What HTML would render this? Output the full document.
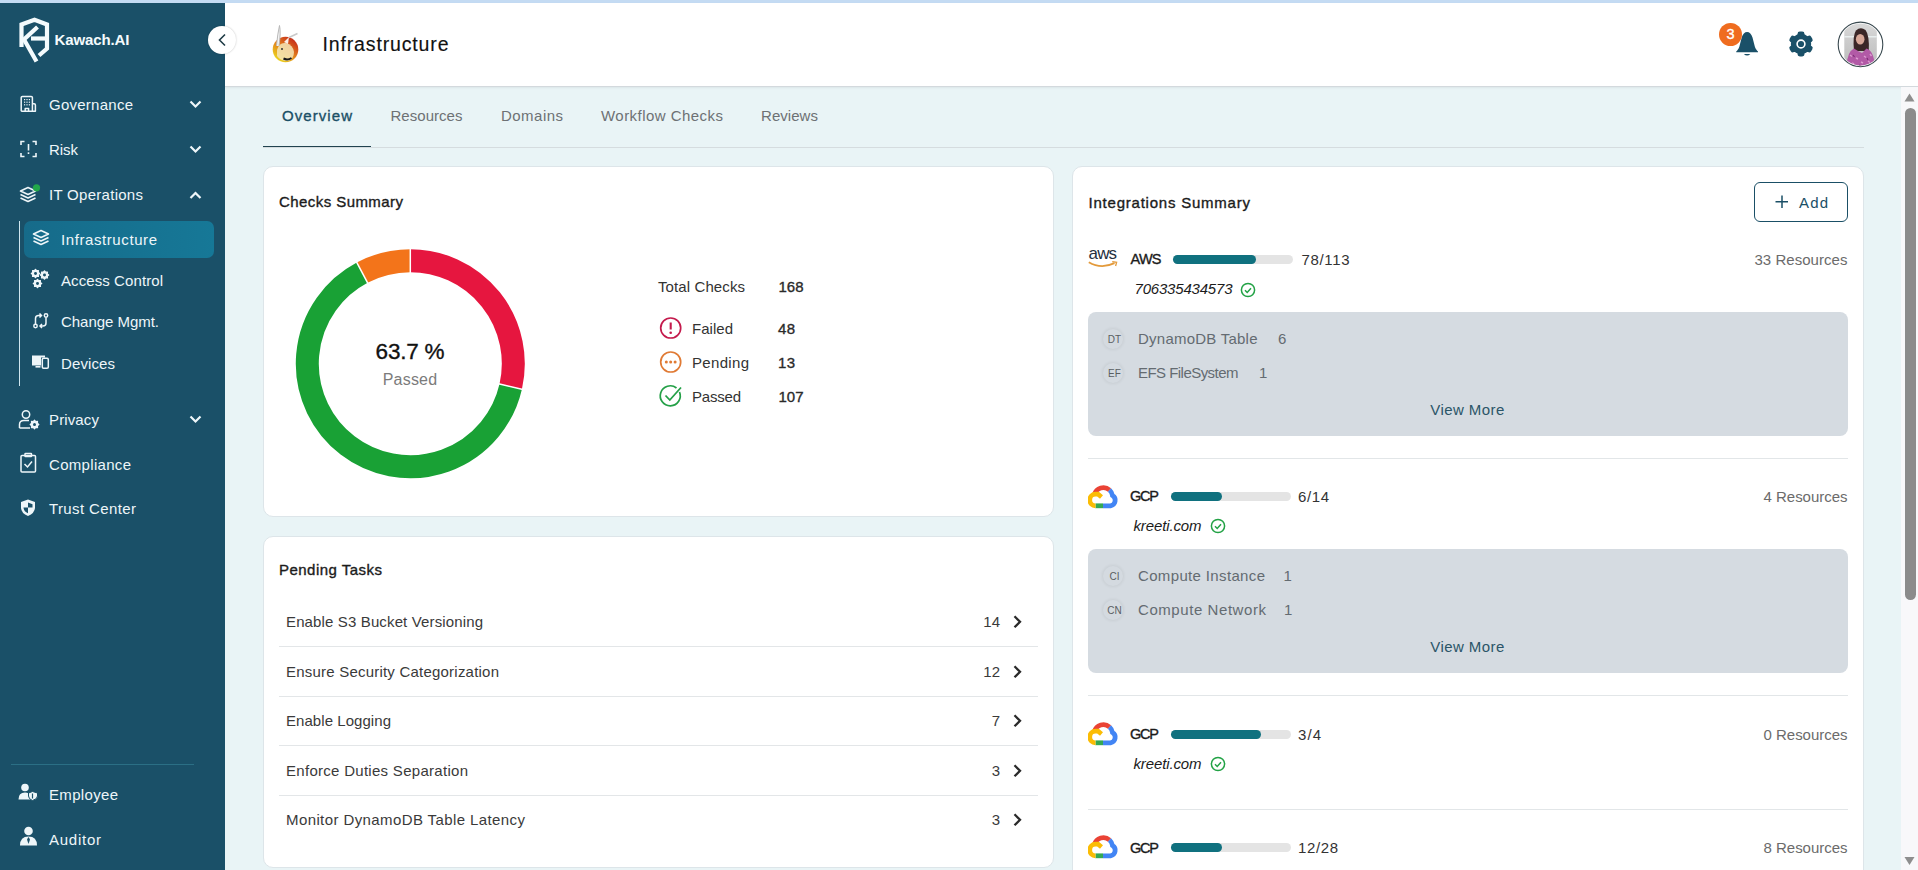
<!DOCTYPE html>
<html><head><meta charset="utf-8"><title>Infrastructure</title>
<style>html,body{margin:0;padding:0;width:1918px;height:870px;overflow:hidden;background:#e9f4f6;font-family:"Liberation Sans", sans-serif;}
*{font-family:"Liberation Sans", sans-serif;}</style></head>
<body><div style="position:relative;width:1918px;height:870px;overflow:hidden">
<div style="position:absolute;left:0;top:0;width:1918px;height:3px;background:#c4dbf3"></div>
<div style="position:absolute;left:225px;top:3px;width:1693px;height:867px;background:#e9f4f6"></div>
<div style="position:absolute;left:0;top:3px;width:225px;height:867px;background:#1a5068"></div>
<div style="position:absolute;left:225px;top:3px;width:1693px;height:83px;background:#fff;border-bottom:1px solid #d3d9dd;box-shadow:0 1px 2px rgba(0,0,0,0.06)"></div>
<svg style="position:absolute;left:0;top:0" width="225" height="80" viewBox="0 0 225 80">
<g fill="none" stroke="#f4fbfd" stroke-width="4.2" stroke-linejoin="miter">
<path d="M21.5 47 L21.5 24.5 L34.5 19.8 L47 24.5 L47 48.5 L39 55.5"/>
<path d="M37.5 27 L24 39.5 L36.5 61.5"/>
<path d="M31 38.5 L47 38.5"/>
</g></svg>
<div style="position:absolute;left:208px;top:26px;width:28px;height:28px;border-radius:50%;background:#fff;box-shadow:0 0 2px rgba(0,0,0,0.25);z-index:6"></div>
<svg style="position:absolute;left:208px;top:26px;z-index:7" width="28" height="28"><path d="M17 8.5 L11.5 14 L17 19.5" fill="none" stroke="#1f3b46" stroke-width="1.6"/></svg>
<svg style="position:absolute;left:0;top:0" width="60" height="220"><g fill="none" stroke="#eef6f9" stroke-width="1.5" stroke-linejoin="round">
<path d="M21.2 111.2 L21.2 97.6 Q21.2 96.4 22.4 96.4 L31.2 96.4 Q32.4 96.4 32.4 97.6 L32.4 111.2 M32.4 103.8 L34.2 103.8 Q35.4 103.8 35.4 105 L35.4 111.2 L21.2 111.2 M25.2 111 L25.2 108.4 L28.6 108.4 L28.6 111"/></g>
<g fill="#eef6f9"><rect x="24.0" y="99.0" width="1.2" height="1.2"/><rect x="24.0" y="101.6" width="1.2" height="1.2"/><rect x="24.0" y="104.2" width="1.2" height="1.2"/><rect x="26.4" y="99.0" width="1.2" height="1.2"/><rect x="26.4" y="101.6" width="1.2" height="1.2"/><rect x="26.4" y="104.2" width="1.2" height="1.2"/><rect x="28.8" y="99.0" width="1.2" height="1.2"/><rect x="28.8" y="101.6" width="1.2" height="1.2"/><rect x="28.8" y="104.2" width="1.2" height="1.2"/></g></svg>
<svg style="position:absolute;left:0;top:0px" width="225" height="210"><path d="M190.5 101.5 L195.5 106.5 L200.5 101.5" fill="none" stroke="#eef6f9" stroke-width="2.2"/></svg>
<svg style="position:absolute;left:0;top:0" width="60" height="220"><g fill="none" stroke="#eef6f9" stroke-width="1.6">
<path d="M21 145 L21 141.5 L24.5 141.5 M32.5 141.5 L36 141.5 L36 145 M36 153 L36 156.5 L32.5 156.5 M24.5 156.5 L21 156.5 L21 153"/>
<path d="M28.5 144 L28.5 150.5"/></g><rect x="27.7" y="152.3" width="1.6" height="1.7" fill="#eef6f9"/></svg>
<svg style="position:absolute;left:0;top:45px" width="225" height="210"><path d="M190.5 101.5 L195.5 106.5 L200.5 101.5" fill="none" stroke="#eef6f9" stroke-width="2.2"/></svg>
<svg style="position:absolute;left:19px;top:186px;overflow:visible" width="22" height="20" viewBox="0 0 22 20"><g fill="none" stroke="#eef6f9" stroke-width="1.6" stroke-linejoin="round">
<path d="M9 1.5 L16.5 5 L9 8.5 L1.5 5 Z"/><path d="M1.5 8.5 L9 12 L16.5 8.5"/><path d="M1.5 12 L9 15.5 L16.5 12"/></g><circle cx="17.5" cy="1.8" r="3.6" fill="#22a84a"/></svg>
<svg style="position:absolute;left:0;top:90px" width="225" height="210"><path d="M190.5 108 L195.5 103 L200.5 108" fill="none" stroke="#eef6f9" stroke-width="2.2"/></svg>
<div style="position:absolute;left:19px;top:221px;width:1.3px;height:165px;background:#cfe6ef"></div>
<div style="position:absolute;left:24px;top:221px;width:190px;height:37px;border-radius:7px;background:linear-gradient(90deg,#166b8a,#167897)"></div>
<svg style="position:absolute;left:32px;top:229px;overflow:visible" width="22" height="20" viewBox="0 0 22 20"><g fill="none" stroke="#eef6f9" stroke-width="1.6" stroke-linejoin="round">
<path d="M9 1.5 L16.5 5 L9 8.5 L1.5 5 Z"/><path d="M1.5 8.5 L9 12 L16.5 8.5"/><path d="M1.5 12 L9 15.5 L16.5 12"/></g></svg>
<svg style="position:absolute;left:0;top:0" width="60" height="300"><path d="M39.70 273.50 L38.29 274.66 L38.47 276.47 L36.66 276.29 L35.50 277.70 L34.34 276.29 L32.53 276.47 L32.71 274.66 L31.30 273.50 L32.71 272.34 L32.53 270.53 L34.34 270.71 L35.50 269.30 L36.66 270.71 L38.47 270.53 L38.29 272.34Z" fill="#eef6f9" stroke="#eef6f9" stroke-width="1.2" stroke-linejoin="round"/><circle cx="35.5" cy="273.5" r="1.47" fill="#1a5068"/><path d="M48.70 275.00 L47.29 276.16 L47.47 277.97 L45.66 277.79 L44.50 279.20 L43.34 277.79 L41.53 277.97 L41.71 276.16 L40.30 275.00 L41.71 273.84 L41.53 272.03 L43.34 272.21 L44.50 270.80 L45.66 272.21 L47.47 272.03 L47.29 273.84Z" fill="#eef6f9" stroke="#eef6f9" stroke-width="1.2" stroke-linejoin="round"/><circle cx="44.5" cy="275" r="1.47" fill="#1a5068"/><path d="M41.70 283.50 L40.29 284.66 L40.47 286.47 L38.66 286.29 L37.50 287.70 L36.34 286.29 L34.53 286.47 L34.71 284.66 L33.30 283.50 L34.71 282.34 L34.53 280.53 L36.34 280.71 L37.50 279.30 L38.66 280.71 L40.47 280.53 L40.29 282.34Z" fill="#eef6f9" stroke="#eef6f9" stroke-width="1.2" stroke-linejoin="round"/><circle cx="37.5" cy="283.5" r="1.47" fill="#1a5068"/></svg>
<svg style="position:absolute;left:0;top:0" width="60" height="340"><g fill="none" stroke="#eef6f9" stroke-width="1.5">
<circle cx="35.5" cy="326" r="1.7"/><circle cx="46" cy="315.5" r="1.7"/>
<path d="M35.5 324 L35.5 318.5 Q35.5 315.5 38.5 315.5 L41 315.5 M39.5 313.5 L41.5 315.5 L39.5 317.5"/>
<path d="M46 317.5 L46 323 Q46 326 43 326 L40.5 326 M42 324 L40 326 L42 328"/></g></svg>
<svg style="position:absolute;left:0;top:0" width="60" height="380"><g fill="#eef6f9">
<path d="M32 355.5 h13 v2 h-4 v8 h-9 z"/><rect x="35.5" y="366" width="5" height="1.6"/></g>
<rect x="42.3" y="358.3" width="6" height="10" rx="1.2" fill="none" stroke="#eef6f9" stroke-width="1.5"/></svg>
<svg style="position:absolute;left:0;top:0" width="60" height="440"><g fill="none" stroke="#eef6f9" stroke-width="1.5">
<circle cx="26" cy="414.5" r="3.7"/><path d="M19.5 428 L19.5 424.5 Q19.5 420.5 24 420.5 L29 420.5"/><path d="M19.5 428 L30 428"/></g>
<path d="M38.80 424.50 L37.36 425.68 L37.54 427.54 L35.68 427.36 L34.50 428.80 L33.32 427.36 L31.46 427.54 L31.64 425.68 L30.20 424.50 L31.64 423.32 L31.46 421.46 L33.32 421.64 L34.50 420.20 L35.68 421.64 L37.54 421.46 L37.36 423.32Z" fill="#eef6f9" stroke="#eef6f9" stroke-width="1.2" stroke-linejoin="round"/><circle cx="34.5" cy="424.5" r="1.50" fill="#1a5068"/></svg>
<svg style="position:absolute;left:0;top:315px" width="225" height="210"><path d="M190.5 101.5 L195.5 106.5 L200.5 101.5" fill="none" stroke="#eef6f9" stroke-width="2.2"/></svg>
<svg style="position:absolute;left:0;top:0" width="60" height="480"><g fill="none" stroke="#eef6f9" stroke-width="1.5">
<rect x="21" y="455.5" width="14.5" height="16.5" rx="1"/><rect x="25" y="453.5" width="6.5" height="3" rx="0.5"/>
<path d="M24.5 464 L27.5 467 L32 461.5"/></g></svg>
<svg style="position:absolute;left:0;top:0" width="60" height="520">
<path d="M28 499.5 L35 502 L35 507.5 Q35 513 28 516 Q21 513 21 507.5 L21 502 Z" fill="#eef6f9"/>
<path d="M28 502.5 L32.5 504.2 L32.5 507.5 L28 507.5 Z M28 507.5 L23.5 507.5 Q23.8 511.5 28 513.3 Z" fill="#1a5068"/></svg>
<div style="position:absolute;left:11px;top:764px;width:183px;height:1px;background:#2b6f85"></div>
<svg style="position:absolute;left:0;top:0" width="60" height="860"><g fill="#eef6f9">
<circle cx="25" cy="787.5" r="3.8"/><path d="M18.5 799.5 Q18.5 792.5 25 792.5 Q29 792.5 30.5 795 L30.5 799.5 Z"/>
<path d="M32.5 791.5 L37.5 793 L37.5 796 Q37.5 799 32.5 800.5 Q28.5 799 28.5 796 L28.5 793 Z" stroke="#1a5068" stroke-width="1"/></g>
<path d="M32.5 793.5 L32.5 798.5" stroke="#1a5068" stroke-width="1.2"/></svg>
<svg style="position:absolute;left:0;top:0" width="60" height="860"><g fill="#eef6f9">
<circle cx="28.5" cy="831" r="4.3"/><path d="M20 845.5 Q20 836.5 28.5 836.5 Q37 836.5 37 845.5 Z"/></g>
<path d="M28.5 837 L27 839.5 L28.5 844 L30 839.5 Z" fill="#1a5068"/></svg>
<svg style="position:absolute;left:262px;top:20px" width="46" height="48" viewBox="0 0 46 48">
<defs><linearGradient id="mg" x1="0.8" y1="0.1" x2="0.2" y2="0.9"><stop offset="0" stop-color="#c7301c"/><stop offset="0.45" stop-color="#e0781c"/><stop offset="1" stop-color="#ecd21e"/></linearGradient></defs>
<circle cx="23.5" cy="29.5" r="12.8" fill="url(#mg)"/>
<path d="M15 30 Q17 22 24 23 Q31 25 32 32 Q32 39 26 41 Q18 41 15 36 Z" fill="#f4e6b8" opacity="0.85"/>
<path d="M22 22 L27 17 L26 24 Z" fill="#fff" opacity="0.9"/>
<path d="M21.5 38.5 Q25.5 40.5 29.5 38" fill="none" stroke="#1a1a1a" stroke-width="2"/>
<circle cx="20" cy="29" r="1" fill="#333"/>
<path d="M14.5 26 Q15.5 14 17.5 5.5 Q19 12 17 26" fill="#f4f4f4" stroke="#b8b8b8" stroke-width="1"/>
<path d="M27 17.5 L35.5 13.5" stroke="#c9c9c9" stroke-width="1.5"/>
</svg>
<svg style="position:absolute;left:1730px;top:26px" width="34" height="36" viewBox="0 0 34 36">
<path d="M17.1 6 C19.5 6 21.5 8 22.5 11.5 L24.8 20.5 C25.5 23 27 24.5 28 25.5 L28 26.2 L6.2 26.2 L6.2 25.5 C7.2 24.5 8.7 23 9.4 20.5 L11.7 11.5 C12.7 8 14.7 6 17.1 6Z" fill="#1a5068"/>
<path d="M13.8 28 Q17.1 31 20.4 28 Z" fill="#1a5068"/>
</svg>
<div style="position:absolute;left:1719px;top:23px;width:23px;height:23px;border-radius:50%;background:#ef6c1f"></div>
<svg style="position:absolute;left:1786px;top:28.7px" width="30" height="30" viewBox="0 0 30 30">
<rect x="11.5" y="2.6" width="7" height="6.5" rx="2.3" transform="rotate(0 15 15)" fill="#1a5068"/><rect x="11.5" y="2.6" width="7" height="6.5" rx="2.3" transform="rotate(60 15 15)" fill="#1a5068"/><rect x="11.5" y="2.6" width="7" height="6.5" rx="2.3" transform="rotate(120 15 15)" fill="#1a5068"/><rect x="11.5" y="2.6" width="7" height="6.5" rx="2.3" transform="rotate(180 15 15)" fill="#1a5068"/><rect x="11.5" y="2.6" width="7" height="6.5" rx="2.3" transform="rotate(240 15 15)" fill="#1a5068"/><rect x="11.5" y="2.6" width="7" height="6.5" rx="2.3" transform="rotate(300 15 15)" fill="#1a5068"/><circle cx="15" cy="15" r="10.2" fill="#1a5068"/><circle cx="15" cy="15" r="3.9" fill="none" stroke="#fff" stroke-width="1.6"/></svg>
<svg style="position:absolute;left:1837px;top:21px" width="48" height="48" viewBox="0 0 48 48">
<defs><clipPath id="av"><circle cx="23.5" cy="23.4" r="21"/></clipPath>
<linearGradient id="avbg" x1="0" y1="0" x2="0" y2="1"><stop offset="0" stop-color="#dadada"/><stop offset="1" stop-color="#b9b9b9"/></linearGradient></defs>
<circle cx="23.5" cy="23.4" r="22" fill="#fff"/>
<g clip-path="url(#av)">
<rect x="7.3" y="0" width="32.5" height="48" fill="url(#avbg)"/>
<rect x="7.3" y="15" width="32.5" height="1.5" fill="#e8eeee"/>
<path d="M17 30 Q15.5 14 19 9.5 Q23.5 5.5 28.5 9 Q32.5 14 31.8 30 Z" fill="#3b2727"/>
<ellipse cx="23.2" cy="18.3" rx="4.3" ry="5.3" fill="#d8a898"/>
<path d="M9.5 48 Q9.5 31 17 27.5 L21 30 L25 32 L29.5 27.5 Q37.5 30 38 48 Z" fill="#b25aa6"/>
<path d="M13 34 l2 1.5 M19 37 l2 1 M27 35 l2 1.5 M33 33 l1.5 2 M15 42 l2 1 M24 41 l2 1 M31 40 l2 1.5 M20 45 l2 1" stroke="#dc9ad0" stroke-width="1.4"/>
<path d="M16 34 l1.5 2 M30 37 l1 2 M22 44 l1.5 1" stroke="#7e2f77" stroke-width="1.2"/>
</g>
<circle cx="23.5" cy="23.4" r="22.3" fill="none" stroke="#3a4a50" stroke-width="1.1"/>
</svg>
<div style="position:absolute;left:1901px;top:87px;width:17px;height:783px;background:#f8f8fa"></div>
<svg style="position:absolute;left:1901px;top:87px" width="17" height="20"><path d="M3.5 14.5 L8.5 6.5 L13.5 14.5 Z" fill="#8e8e8e"/></svg>
<div style="position:absolute;left:1905px;top:108px;width:11px;height:492px;border-radius:6px;background:#8b8b8b"></div>
<svg style="position:absolute;left:1901px;top:853px" width="17" height="17"><path d="M3.5 4 L13.5 4 L8.5 12 Z" fill="#8e8e8e"/></svg>
<div style="position:absolute;left:263px;top:147px;width:1601px;height:1px;background:#d5dcdf"></div>
<div style="position:absolute;left:263px;top:145.7px;width:108px;height:1.5px;background:#21434f"></div>
<div style="position:absolute;left:263px;top:166px;width:791px;height:351px;background:#fff;border:1px solid #dde5e9;border-radius:10px;box-sizing:border-box"></div>
<div style="position:absolute;left:263px;top:536px;width:791px;height:332px;background:#fff;border:1px solid #dde5e9;border-radius:10px;box-sizing:border-box"></div>
<div style="position:absolute;left:1072px;top:166px;width:792px;height:720px;background:#fff;border:1px solid #dde5e9;border-radius:10px;box-sizing:border-box"></div>
<svg style="position:absolute;left:0;top:0;z-index:3" width="1060" height="520"><path d="M410.30 260.70 A103 103 0 0 1 510.72 386.62" fill="none" stroke="#e6163f" stroke-width="23"/><path d="M510.72 386.62 A103 103 0 1 1 362.17 272.64" fill="none" stroke="#19a135" stroke-width="23"/><path d="M362.17 272.64 A103 103 0 0 1 410.30 260.70" fill="none" stroke="#f3741a" stroke-width="23"/><path d="M410.30 273.20 L410.30 248.20" stroke="#fff" stroke-width="1.5"/><path d="M498.53 383.84 L522.90 389.40" stroke="#fff" stroke-width="1.5"/><path d="M368.01 283.69 L356.33 261.58" stroke="#fff" stroke-width="1.5"/></svg>
<svg style="position:absolute;left:658px;top:315px;z-index:4" width="26" height="95" viewBox="0 0 26 95">
<circle cx="12.7" cy="13" r="10" fill="none" stroke="#c41a4c" stroke-width="1.7"/>
<path d="M12.7 7.5 L12.7 14.5" stroke="#c41a4c" stroke-width="2.1"/><circle cx="12.7" cy="17.8" r="1.3" fill="#c41a4c"/>
<circle cx="12.7" cy="47" r="10" fill="none" stroke="#e07a34" stroke-width="1.7"/>
<circle cx="8.3" cy="47" r="1.5" fill="#e07a34"/><circle cx="12.7" cy="47" r="1.5" fill="#e07a34"/><circle cx="17.1" cy="47" r="1.5" fill="#e07a34"/>
<path d="M21.5 77 A10 10 0 1 1 18.5 73" fill="none" stroke="#24a047" stroke-width="1.7"/>
<path d="M7.5 80.5 L11.8 85 L23 72.5" fill="none" stroke="#24a047" stroke-width="1.8"/>
</svg>
<svg style="position:absolute;left:1010px;top:613.6px" width="16" height="16"><path d="M4.5 2.3 L10 7.8 L4.5 13.3" fill="none" stroke="#2a2a2a" stroke-width="2.3"/></svg>
<div style="position:absolute;left:279px;top:646px;width:759px;height:1px;background:#e3e6e8"></div>
<svg style="position:absolute;left:1010px;top:663.5px" width="16" height="16"><path d="M4.5 2.3 L10 7.8 L4.5 13.3" fill="none" stroke="#2a2a2a" stroke-width="2.3"/></svg>
<div style="position:absolute;left:279px;top:696px;width:759px;height:1px;background:#e3e6e8"></div>
<svg style="position:absolute;left:1010px;top:712.9px" width="16" height="16"><path d="M4.5 2.3 L10 7.8 L4.5 13.3" fill="none" stroke="#2a2a2a" stroke-width="2.3"/></svg>
<div style="position:absolute;left:279px;top:745px;width:759px;height:1px;background:#e3e6e8"></div>
<svg style="position:absolute;left:1010px;top:762.7px" width="16" height="16"><path d="M4.5 2.3 L10 7.8 L4.5 13.3" fill="none" stroke="#2a2a2a" stroke-width="2.3"/></svg>
<div style="position:absolute;left:279px;top:795px;width:759px;height:1px;background:#e3e6e8"></div>
<svg style="position:absolute;left:1010px;top:812.1px" width="16" height="16"><path d="M4.5 2.3 L10 7.8 L4.5 13.3" fill="none" stroke="#2a2a2a" stroke-width="2.3"/></svg>
<div style="position:absolute;left:1754px;top:182px;width:94px;height:40px;border:1.5px solid #1a4f66;border-radius:6px;box-sizing:border-box"></div>
<svg style="position:absolute;left:1774px;top:194px" width="16" height="16"><path d="M8 1.5 L8 14 M1.5 7.8 L14 7.8" stroke="#1a4f66" stroke-width="1.5"/></svg>
<svg style="position:absolute;left:1086px;top:244px" width="34" height="26" viewBox="0 0 34 26">
<text x="2.6" y="14.8" font-family="Liberation Sans" font-size="17" fill="#252f3e" letter-spacing="-0.9">aws</text>
<path d="M2.8 18.2 Q15 25.5 28.5 19.2" fill="none" stroke="#e39a3b" stroke-width="1.9"/><path d="M26.2 17.6 L30.6 18.3 L29.6 22" fill="none" stroke="#e39a3b" stroke-width="1.3"/></svg>
<div style="position:absolute;left:1173px;top:255px;width:120px;height:9px;border-radius:5px;background:#e4e4e4"></div>
<div style="position:absolute;left:1173px;top:255px;width:83px;height:9px;border-radius:5px;background:#10717f"></div>
<svg style="position:absolute;left:1239.5px;top:281.5px" width="16" height="16"><circle cx="8" cy="8" r="6.6" fill="none" stroke="#22a245" stroke-width="1.5"/><path d="M5 8.3 L7.2 10.5 L11 6.3" fill="none" stroke="#22a245" stroke-width="1.5"/></svg>
<div style="position:absolute;left:1088px;top:312px;width:760px;height:124px;border-radius:8px;background:#d5dbe1"></div>
<div style="position:absolute;left:1103px;top:328.5px;width:20px;height:20px;border-radius:50%;background:#d4dae0;box-shadow:0 0 3px 1px rgba(0,0,0,0.06)"></div>
<div style="position:absolute;left:1103px;top:362.5px;width:20px;height:20px;border-radius:50%;background:#d4dae0;box-shadow:0 0 3px 1px rgba(0,0,0,0.06)"></div>
<div style="position:absolute;left:1088px;top:458px;width:760px;height:1px;background:#e2e6e8"></div>
<svg style="position:absolute;left:1088px;top:483.5px" width="31" height="25" viewBox="0 0 31 25"><g fill="none" stroke-width="4.8" stroke-linecap="butt">
<path d="M6.5 10.5 A9.2 9.2 0 0 1 21.5 6" stroke="#ea4335"/>
<path d="M21.5 6 A9.2 9.2 0 0 1 24.5 11.5 A5.6 5.6 0 0 1 22.5 21.8 L15 21.8" stroke="#4285f4"/>
<path d="M15 21.8 L7.5 21.8" stroke="#34a853"/>
<path d="M7.5 21.8 A5.8 5.8 0 0 1 7.5 10.2 L10 10.2 L13.5 13" stroke="#fbbc04"/>
</g></svg>
<div style="position:absolute;left:1171px;top:492px;width:120px;height:9px;border-radius:5px;background:#e4e4e4"></div>
<div style="position:absolute;left:1171px;top:492px;width:51px;height:9px;border-radius:5px;background:#10717f"></div>
<svg style="position:absolute;left:1209.5px;top:518.3px" width="16" height="16"><circle cx="8" cy="8" r="6.6" fill="none" stroke="#22a245" stroke-width="1.5"/><path d="M5 8.3 L7.2 10.5 L11 6.3" fill="none" stroke="#22a245" stroke-width="1.5"/></svg>
<div style="position:absolute;left:1088px;top:549px;width:760px;height:124px;border-radius:8px;background:#d5dbe1"></div>
<div style="position:absolute;left:1103px;top:565.8px;width:20px;height:20px;border-radius:50%;background:#d4dae0;box-shadow:0 0 3px 1px rgba(0,0,0,0.06)"></div>
<div style="position:absolute;left:1103px;top:599.6px;width:20px;height:20px;border-radius:50%;background:#d4dae0;box-shadow:0 0 3px 1px rgba(0,0,0,0.06)"></div>
<div style="position:absolute;left:1088px;top:695px;width:760px;height:1px;background:#e2e6e8"></div>
<svg style="position:absolute;left:1088px;top:720.5px" width="31" height="25" viewBox="0 0 31 25"><g fill="none" stroke-width="4.8" stroke-linecap="butt">
<path d="M6.5 10.5 A9.2 9.2 0 0 1 21.5 6" stroke="#ea4335"/>
<path d="M21.5 6 A9.2 9.2 0 0 1 24.5 11.5 A5.6 5.6 0 0 1 22.5 21.8 L15 21.8" stroke="#4285f4"/>
<path d="M15 21.8 L7.5 21.8" stroke="#34a853"/>
<path d="M7.5 21.8 A5.8 5.8 0 0 1 7.5 10.2 L10 10.2 L13.5 13" stroke="#fbbc04"/>
</g></svg>
<div style="position:absolute;left:1171px;top:729.5px;width:120px;height:9px;border-radius:5px;background:#e4e4e4"></div>
<div style="position:absolute;left:1171px;top:729.5px;width:90px;height:9px;border-radius:5px;background:#10717f"></div>
<svg style="position:absolute;left:1209.5px;top:756px" width="16" height="16"><circle cx="8" cy="8" r="6.6" fill="none" stroke="#22a245" stroke-width="1.5"/><path d="M5 8.3 L7.2 10.5 L11 6.3" fill="none" stroke="#22a245" stroke-width="1.5"/></svg>
<div style="position:absolute;left:1088px;top:809px;width:760px;height:1px;background:#e2e6e8"></div>
<svg style="position:absolute;left:1088px;top:833.5px" width="31" height="25" viewBox="0 0 31 25"><g fill="none" stroke-width="4.8" stroke-linecap="butt">
<path d="M6.5 10.5 A9.2 9.2 0 0 1 21.5 6" stroke="#ea4335"/>
<path d="M21.5 6 A9.2 9.2 0 0 1 24.5 11.5 A5.6 5.6 0 0 1 22.5 21.8 L15 21.8" stroke="#4285f4"/>
<path d="M15 21.8 L7.5 21.8" stroke="#34a853"/>
<path d="M7.5 21.8 A5.8 5.8 0 0 1 7.5 10.2 L10 10.2 L13.5 13" stroke="#fbbc04"/>
</g></svg>
<div style="position:absolute;left:1171px;top:843px;width:120px;height:9px;border-radius:5px;background:#e4e4e4"></div>
<div style="position:absolute;left:1171px;top:843px;width:51px;height:9px;border-radius:5px;background:#10717f"></div>
<div id="t0" style="position:absolute;top:30.30px;font-size:15px;line-height:20px;font-weight:700;color:#f4fbfd;white-space:nowrap;z-index:5;letter-spacing:-0.107px;left:54.5px;">Kawach.AI</div>
<div id="t1" style="position:absolute;top:94.80px;font-size:15px;line-height:20px;font-weight:400;color:#eef6f9;white-space:nowrap;z-index:5;letter-spacing:0.253px;left:49px;">Governance</div>
<div id="t2" style="position:absolute;top:139.80px;font-size:15px;line-height:20px;font-weight:400;color:#eef6f9;white-space:nowrap;z-index:5;letter-spacing:-0.057px;left:49px;">Risk</div>
<div id="t3" style="position:absolute;top:184.80px;font-size:15px;line-height:20px;font-weight:400;color:#eef6f9;white-space:nowrap;z-index:5;letter-spacing:0.283px;left:49px;">IT Operations</div>
<div id="t4" style="position:absolute;top:229.80px;font-size:15px;line-height:20px;font-weight:400;color:#eef6f9;white-space:nowrap;z-index:5;letter-spacing:0.587px;left:61px;">Infrastructure</div>
<div id="t5" style="position:absolute;top:270.80px;font-size:15px;line-height:20px;font-weight:400;color:#eef6f9;white-space:nowrap;z-index:5;letter-spacing:0.087px;left:61px;">Access Control</div>
<div id="t6" style="position:absolute;top:312.30px;font-size:15px;line-height:20px;font-weight:400;color:#eef6f9;white-space:nowrap;z-index:5;letter-spacing:-0.036px;left:61px;">Change Mgmt.</div>
<div id="t7" style="position:absolute;top:353.80px;font-size:15px;line-height:20px;font-weight:400;color:#eef6f9;white-space:nowrap;z-index:5;letter-spacing:0.107px;left:61px;">Devices</div>
<div id="t8" style="position:absolute;top:409.80px;font-size:15px;line-height:20px;font-weight:400;color:#eef6f9;white-space:nowrap;z-index:5;letter-spacing:0.135px;left:49px;">Privacy</div>
<div id="t9" style="position:absolute;top:454.80px;font-size:15px;line-height:20px;font-weight:400;color:#eef6f9;white-space:nowrap;z-index:5;letter-spacing:0.309px;left:49px;">Compliance</div>
<div id="t10" style="position:absolute;top:499.30px;font-size:15px;line-height:20px;font-weight:400;color:#eef6f9;white-space:nowrap;z-index:5;letter-spacing:0.381px;left:49px;">Trust Center</div>
<div id="t11" style="position:absolute;top:784.80px;font-size:15px;line-height:20px;font-weight:400;color:#eef6f9;white-space:nowrap;z-index:5;letter-spacing:0.328px;left:49px;">Employee</div>
<div id="t12" style="position:absolute;top:829.80px;font-size:15px;line-height:20px;font-weight:400;color:#eef6f9;white-space:nowrap;z-index:5;letter-spacing:0.745px;left:49px;">Auditor</div>
<div id="t13" style="position:absolute;top:31.74px;font-size:19.5px;line-height:25px;font-weight:400;color:#111;white-space:nowrap;z-index:5;-webkit-text-stroke:0.35px #111;letter-spacing:0.855px;left:322.5px;-webkit-text-stroke:0.15px #111;">Infrastructure</div>
<div id="t14" style="position:absolute;top:25.28px;font-size:14.5px;line-height:19px;font-weight:400;color:#fff;white-space:nowrap;z-index:5;-webkit-text-stroke:0.35px #fff;left:1430.50px;width:600px;text-align:center;">3</div>
<div id="t15" style="position:absolute;top:105.80px;font-size:15px;line-height:20px;font-weight:400;color:#1a4f66;white-space:nowrap;z-index:5;-webkit-text-stroke:0.35px #1a4f66;letter-spacing:1.069px;left:282px;">Overview</div>
<div id="t16" style="position:absolute;top:105.80px;font-size:15px;line-height:20px;font-weight:400;color:#6d7174;white-space:nowrap;z-index:5;letter-spacing:0.037px;left:390.5px;">Resources</div>
<div id="t17" style="position:absolute;top:105.80px;font-size:15px;line-height:20px;font-weight:400;color:#6d7174;white-space:nowrap;z-index:5;letter-spacing:0.469px;left:501px;">Domains</div>
<div id="t18" style="position:absolute;top:105.80px;font-size:15px;line-height:20px;font-weight:400;color:#6d7174;white-space:nowrap;z-index:5;letter-spacing:0.458px;left:601px;">Workflow Checks</div>
<div id="t19" style="position:absolute;top:105.80px;font-size:15px;line-height:20px;font-weight:400;color:#6d7174;white-space:nowrap;z-index:5;letter-spacing:0.052px;left:761px;">Reviews</div>
<div id="t20" style="position:absolute;top:192.30px;font-size:15px;line-height:20px;font-weight:400;color:#1b1b1b;white-space:nowrap;z-index:5;-webkit-text-stroke:0.35px #1b1b1b;letter-spacing:0.434px;left:279px;">Checks Summary</div>
<div id="t21" style="position:absolute;top:336.70px;font-size:22.5px;line-height:29px;font-weight:400;color:#111;white-space:nowrap;z-index:5;-webkit-text-stroke:0.35px #111;left:110.00px;width:600px;text-align:center;letter-spacing:-0.2px;">63.7 %</div>
<div id="t22" style="position:absolute;top:369.26px;font-size:16px;line-height:21px;font-weight:400;color:#7b7b7b;white-space:nowrap;z-index:5;letter-spacing:0.225px;left:110.00px;width:600px;text-align:center;">Passed</div>
<div id="t23" style="position:absolute;top:276.60px;font-size:15px;line-height:20px;font-weight:400;color:#333;white-space:nowrap;z-index:5;letter-spacing:0.102px;left:658px;">Total Checks</div>
<div id="t24" style="position:absolute;top:276.60px;font-size:15px;line-height:20px;font-weight:400;color:#2a2a2a;white-space:nowrap;z-index:5;-webkit-text-stroke:0.35px #2a2a2a;letter-spacing:-0.016px;left:778.5px;">168</div>
<div id="t25" style="position:absolute;top:319.10px;font-size:15px;line-height:20px;font-weight:400;color:#333;white-space:nowrap;z-index:5;letter-spacing:0.028px;left:692px;">Failed</div>
<div id="t26" style="position:absolute;top:319.10px;font-size:15px;line-height:20px;font-weight:400;color:#2a2a2a;white-space:nowrap;z-index:5;-webkit-text-stroke:0.35px #2a2a2a;letter-spacing:0.312px;left:778px;">48</div>
<div id="t27" style="position:absolute;top:353.10px;font-size:15px;line-height:20px;font-weight:400;color:#333;white-space:nowrap;z-index:5;letter-spacing:0.323px;left:692px;">Pending</div>
<div id="t28" style="position:absolute;top:353.10px;font-size:15px;line-height:20px;font-weight:400;color:#2a2a2a;white-space:nowrap;z-index:5;-webkit-text-stroke:0.35px #2a2a2a;letter-spacing:0.312px;left:778px;">13</div>
<div id="t29" style="position:absolute;top:387.10px;font-size:15px;line-height:20px;font-weight:400;color:#333;white-space:nowrap;z-index:5;letter-spacing:-0.209px;left:692px;">Passed</div>
<div id="t30" style="position:absolute;top:387.10px;font-size:15px;line-height:20px;font-weight:400;color:#2a2a2a;white-space:nowrap;z-index:5;-webkit-text-stroke:0.35px #2a2a2a;letter-spacing:-0.016px;left:778.5px;">107</div>
<div id="t31" style="position:absolute;top:560.40px;font-size:15px;line-height:20px;font-weight:400;color:#1b1b1b;white-space:nowrap;z-index:5;-webkit-text-stroke:0.35px #1b1b1b;letter-spacing:0.475px;left:279px;">Pending Tasks</div>
<div id="t32" style="position:absolute;top:611.90px;font-size:15px;line-height:20px;font-weight:400;color:#3a3a3a;white-space:nowrap;z-index:5;letter-spacing:0.136px;left:286px;">Enable S3 Bucket Versioning</div>
<div id="t33" style="position:absolute;top:611.90px;font-size:15px;line-height:20px;font-weight:400;color:#3a3a3a;white-space:nowrap;z-index:5;right:918.00px;">14</div>
<div id="t34" style="position:absolute;top:661.80px;font-size:15px;line-height:20px;font-weight:400;color:#3a3a3a;white-space:nowrap;z-index:5;letter-spacing:0.214px;left:286px;">Ensure Security Categorization</div>
<div id="t35" style="position:absolute;top:661.80px;font-size:15px;line-height:20px;font-weight:400;color:#3a3a3a;white-space:nowrap;z-index:5;right:918.00px;">12</div>
<div id="t36" style="position:absolute;top:711.20px;font-size:15px;line-height:20px;font-weight:400;color:#3a3a3a;white-space:nowrap;z-index:5;letter-spacing:0.056px;left:286px;">Enable Logging</div>
<div id="t37" style="position:absolute;top:711.20px;font-size:15px;line-height:20px;font-weight:400;color:#3a3a3a;white-space:nowrap;z-index:5;right:918.00px;">7</div>
<div id="t38" style="position:absolute;top:761.00px;font-size:15px;line-height:20px;font-weight:400;color:#3a3a3a;white-space:nowrap;z-index:5;letter-spacing:0.287px;left:286px;">Enforce Duties Separation</div>
<div id="t39" style="position:absolute;top:761.00px;font-size:15px;line-height:20px;font-weight:400;color:#3a3a3a;white-space:nowrap;z-index:5;right:918.00px;">3</div>
<div id="t40" style="position:absolute;top:810.40px;font-size:15px;line-height:20px;font-weight:400;color:#3a3a3a;white-space:nowrap;z-index:5;letter-spacing:0.402px;left:286px;">Monitor DynamoDB Table Latency</div>
<div id="t41" style="position:absolute;top:810.40px;font-size:15px;line-height:20px;font-weight:400;color:#3a3a3a;white-space:nowrap;z-index:5;right:918.00px;">3</div>
<div id="t42" style="position:absolute;top:193.10px;font-size:15px;line-height:20px;font-weight:400;color:#1b1b1b;white-space:nowrap;z-index:5;-webkit-text-stroke:0.35px #1b1b1b;letter-spacing:0.777px;left:1088.5px;">Integrations Summary</div>
<div id="t43" style="position:absolute;top:193.10px;font-size:15px;line-height:20px;font-weight:400;color:#1a4f66;white-space:nowrap;z-index:5;letter-spacing:1.148px;left:1799px;">Add</div>
<div id="t44" style="position:absolute;top:250.48px;font-size:14.5px;line-height:19px;font-weight:400;color:#1b1b1b;white-space:nowrap;z-index:5;-webkit-text-stroke:0.35px #1b1b1b;letter-spacing:-0.750px;left:1130.5px;">AWS</div>
<div id="t45" style="position:absolute;top:249.80px;font-size:15px;line-height:20px;font-weight:400;color:#333;white-space:nowrap;z-index:5;letter-spacing:0.647px;left:1301.5px;">78/113</div>
<div id="t46" style="position:absolute;top:249.80px;font-size:15px;line-height:20px;font-weight:400;color:#6b6b6b;white-space:nowrap;z-index:5;letter-spacing:0.040px;right:70.50px;">33 Resources</div>
<div id="t47" style="position:absolute;top:279.00px;font-size:15px;line-height:20px;font-weight:400;color:#1b1b1b;white-space:nowrap;z-index:5;font-style:italic;letter-spacing:-0.192px;left:1134.5px;">706335434573</div>
<div id="t48" style="position:absolute;top:332.54px;font-size:10px;line-height:13px;font-weight:400;color:#5a5e62;white-space:nowrap;z-index:5;left:814.50px;width:600px;text-align:center;">DT</div>
<div id="t49" style="position:absolute;top:328.80px;font-size:15px;line-height:20px;font-weight:400;color:#646b71;white-space:nowrap;z-index:5;letter-spacing:0.234px;left:1138px;">DynamoDB Table</div>
<div id="t50" style="position:absolute;top:328.80px;font-size:15px;line-height:20px;font-weight:400;color:#646b71;white-space:nowrap;z-index:5;left:1278px;">6</div>
<div id="t51" style="position:absolute;top:366.54px;font-size:10px;line-height:13px;font-weight:400;color:#5a5e62;white-space:nowrap;z-index:5;left:814.50px;width:600px;text-align:center;">EF</div>
<div id="t52" style="position:absolute;top:362.80px;font-size:15px;line-height:20px;font-weight:400;color:#646b71;white-space:nowrap;z-index:5;letter-spacing:-0.541px;left:1138px;">EFS FileSystem</div>
<div id="t53" style="position:absolute;top:362.80px;font-size:15px;line-height:20px;font-weight:400;color:#646b71;white-space:nowrap;z-index:5;left:1259px;">1</div>
<div id="t54" style="position:absolute;top:399.80px;font-size:15px;line-height:20px;font-weight:400;color:#2b5568;white-space:nowrap;z-index:5;letter-spacing:0.426px;left:1167.50px;width:600px;text-align:center;">View More</div>
<div id="t55" style="position:absolute;top:487.48px;font-size:14.5px;line-height:19px;font-weight:400;color:#1b1b1b;white-space:nowrap;z-index:5;-webkit-text-stroke:0.35px #1b1b1b;letter-spacing:-1.211px;left:1130px;">GCP</div>
<div id="t56" style="position:absolute;top:486.80px;font-size:15px;line-height:20px;font-weight:400;color:#333;white-space:nowrap;z-index:5;letter-spacing:0.599px;left:1298px;">6/14</div>
<div id="t57" style="position:absolute;top:486.80px;font-size:15px;line-height:20px;font-weight:400;color:#6b6b6b;white-space:nowrap;z-index:5;letter-spacing:-0.022px;right:70.50px;">4 Resources</div>
<div id="t58" style="position:absolute;top:515.80px;font-size:15px;line-height:20px;font-weight:400;color:#1b1b1b;white-space:nowrap;z-index:5;font-style:italic;letter-spacing:-0.132px;left:1133.5px;">kreeti.com</div>
<div id="t59" style="position:absolute;top:569.83px;font-size:10px;line-height:13px;font-weight:400;color:#5a5e62;white-space:nowrap;z-index:5;left:814.50px;width:600px;text-align:center;">CI</div>
<div id="t60" style="position:absolute;top:566.10px;font-size:15px;line-height:20px;font-weight:400;color:#646b71;white-space:nowrap;z-index:5;letter-spacing:0.350px;left:1138px;">Compute Instance</div>
<div id="t61" style="position:absolute;top:566.10px;font-size:15px;line-height:20px;font-weight:400;color:#646b71;white-space:nowrap;z-index:5;left:1283.5px;">1</div>
<div id="t62" style="position:absolute;top:603.63px;font-size:10px;line-height:13px;font-weight:400;color:#5a5e62;white-space:nowrap;z-index:5;left:814.50px;width:600px;text-align:center;">CN</div>
<div id="t63" style="position:absolute;top:599.90px;font-size:15px;line-height:20px;font-weight:400;color:#646b71;white-space:nowrap;z-index:5;letter-spacing:0.568px;left:1138px;">Compute Network</div>
<div id="t64" style="position:absolute;top:599.90px;font-size:15px;line-height:20px;font-weight:400;color:#646b71;white-space:nowrap;z-index:5;left:1284px;">1</div>
<div id="t65" style="position:absolute;top:636.60px;font-size:15px;line-height:20px;font-weight:400;color:#2b5568;white-space:nowrap;z-index:5;letter-spacing:0.426px;left:1167.50px;width:600px;text-align:center;">View More</div>
<div id="t66" style="position:absolute;top:725.18px;font-size:14.5px;line-height:19px;font-weight:400;color:#1b1b1b;white-space:nowrap;z-index:5;-webkit-text-stroke:0.35px #1b1b1b;letter-spacing:-1.211px;left:1130px;">GCP</div>
<div id="t67" style="position:absolute;top:724.50px;font-size:15px;line-height:20px;font-weight:400;color:#333;white-space:nowrap;z-index:5;letter-spacing:1.070px;left:1298px;">3/4</div>
<div id="t68" style="position:absolute;top:724.50px;font-size:15px;line-height:20px;font-weight:400;color:#6b6b6b;white-space:nowrap;z-index:5;letter-spacing:-0.022px;right:70.50px;">0 Resources</div>
<div id="t69" style="position:absolute;top:754.30px;font-size:15px;line-height:20px;font-weight:400;color:#1b1b1b;white-space:nowrap;z-index:5;font-style:italic;letter-spacing:-0.132px;left:1133.5px;">kreeti.com</div>
<div id="t70" style="position:absolute;top:838.68px;font-size:14.5px;line-height:19px;font-weight:400;color:#1b1b1b;white-space:nowrap;z-index:5;-webkit-text-stroke:0.35px #1b1b1b;letter-spacing:-1.211px;left:1130px;">GCP</div>
<div id="t71" style="position:absolute;top:838.00px;font-size:15px;line-height:20px;font-weight:400;color:#333;white-space:nowrap;z-index:5;letter-spacing:0.613px;left:1298px;">12/28</div>
<div id="t72" style="position:absolute;top:838.00px;font-size:15px;line-height:20px;font-weight:400;color:#6b6b6b;white-space:nowrap;z-index:5;letter-spacing:-0.022px;right:70.50px;">8 Resources</div>
</div></body></html>
